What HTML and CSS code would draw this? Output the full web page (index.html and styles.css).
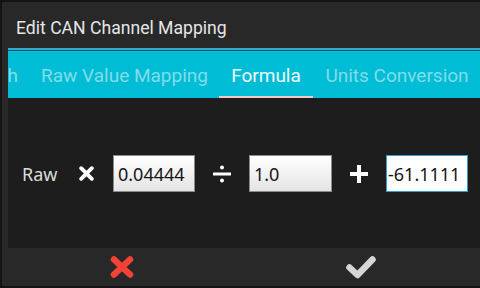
FILE: index.html
```html
<!DOCTYPE html>
<html>
<head>
<meta charset="utf-8">
<link rel="stylesheet" href="styles.css">
</head>
<body>
<div class="screen">
  <div class="dialog">
    <div class="title">Edit CAN Channel Mapping</div>
    <div class="divider"></div>
    <div class="tabbar">
      <div class="tabs">
        <div class="tab tab-first">Math</div>
        <div class="tab tab-raw">Raw Value Mapping</div>
        <div class="tab tab-formula active">Formula</div>
        <div class="tab tab-units">Units Conversion</div>
      </div>
    </div>
    <div class="content">
      <div class="row">
        <span class="label">Raw</span>
        <span class="op">
          <svg width="15" height="15" viewBox="0 0 15 15"><path d="M2.2 2.2 L12.8 12.8 M12.8 2.2 L2.2 12.8" stroke="#fff" stroke-width="3.8" stroke-linecap="round"/></svg>
        </span>
        <input class="field" type="text" value="0.04444">
        <span class="op">
          <svg width="18" height="18" viewBox="0 0 18 18"><rect x="0" y="7.5" width="18" height="3" fill="#fff"/><circle cx="9" cy="2.5" r="2" fill="#fff"/><circle cx="9" cy="15.5" r="2" fill="#fff"/></svg>
        </span>
        <input class="field field-mid" type="text" value="1.0">
        <span class="op">
          <svg width="18" height="18" viewBox="0 0 18 18"><rect x="0" y="7" width="18" height="4" fill="#fff"/><rect x="7" y="0" width="4" height="18" fill="#fff"/></svg>
        </span>
        <input class="field focused" type="text" value="-61.1111">
      </div>
    </div>
    <div class="buttons">
      <button class="btn" type="button">
        <svg width="26" height="24" viewBox="0 0 26 24"><path d="M5 4.5 L21 19.5 M21 4.5 L5 19.5" stroke="#f44336" stroke-width="6.5" stroke-linecap="round"/></svg>
      </button>
      <button class="btn" type="button">
        <svg width="32" height="26" viewBox="0 0 32 26"><path d="M4.5 13.5 L12.5 21 L27.5 5.5" stroke="#d6d6d6" stroke-width="6.5" stroke-linecap="round" stroke-linejoin="round" fill="none"/></svg>
      </button>
    </div>
  </div>
</div>
</body>
</html>
```

FILE: styles.css
```css
* { box-sizing: border-box; }
html, body {
  margin: 0;
  padding: 0;
  background: #141414;
  width: 480px;
  height: 288px;
  overflow: hidden;
}
.screen {
  padding: 2px 0 0 2px;
}
.dialog {
  width: 478px;
  height: 284px;
  background: #282828;
  display: flex;
  flex-direction: column;
}
.title {
  height: 46px;
  padding: 15px 0 0 14px;
  font-family: Roboto, "Noto Sans", sans-serif;
  font-size: 17.6px;
  color: #e6e6e6;
  line-height: 22px;
}
.divider {
  margin-left: 6px;
  height: 3px;
  border-top: 2px solid #35a7d3;
  background: #1d4d58;
}
.tabbar {
  margin-left: 6px;
  height: 47px;
  background: #00bdd5;
  overflow: hidden;
  position: relative;
}
.tabs {
  display: flex;
  height: 47px;
  margin-left: -52px;
}
.tab {
  flex: none;
  height: 47px;
  line-height: 50px;
  text-align: center;
  font-family: Roboto, "Noto Sans", sans-serif;
  font-size: 19px;
  color: #80dcea;
  white-space: nowrap;
}
.tab-first {
  width: 74px;
  text-align: right;
  padding-right: 12px;
}
.tab-raw { width: 189px; }
.tab-formula { width: 94px; }
.tab-units { width: 168px; }
.tab.active {
  color: #f4f8f8;
  border-bottom: 2px solid #f5c9cc;
}
.content {
  margin-left: 6px;
  height: 150px;
  background: #1d1d1d;
  display: flex;
  align-items: center;
}
.row {
  display: flex;
  align-items: center;
  padding-left: 14px;
  margin-top: 1px;
}
.label {
  width: 37px;
  font-family: "Noto Sans", sans-serif;
  font-size: 18px;
  color: #dcdcdc;
}
.op {
  width: 54px;
  display: flex;
  justify-content: center;
  align-items: center;
}
.op svg { display: block; }
.field {
  width: 82px;
  height: 37px;
  padding: 0 0 0 4px;
  border: 1px solid #8a8a8a;
  background: linear-gradient(#ffffff, #e4e4e4);
  font-family: "Noto Sans", sans-serif;
  font-size: 18px;
  color: #151515;
  outline: none;
}
.field-mid { width: 83px; }
.field.focused {
  border: 1px solid #2d9fd0;
  background: #ffffff;
  padding-left: 1px;
}
.buttons {
  display: flex;
  height: 38px;
}
.btn {
  flex: 1;
  border: none;
  background: transparent;
  padding: 0;
  display: flex;
  justify-content: center;
  align-items: center;
}
.btn svg { display: block; }
```
